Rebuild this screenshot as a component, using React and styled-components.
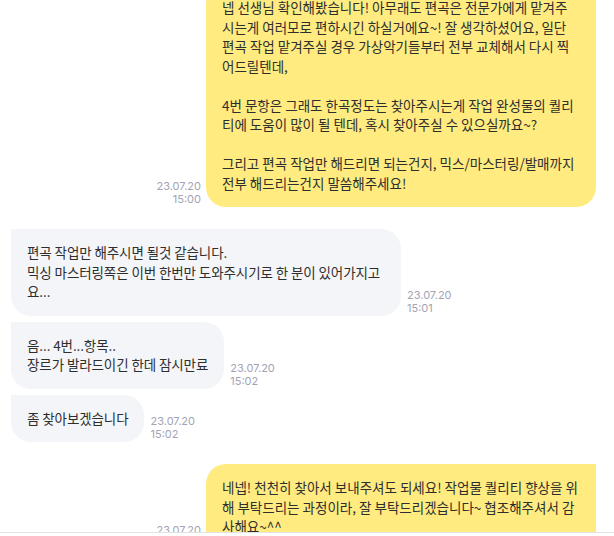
import styled, { createGlobalStyle } from 'styled-components';

const YELLOW = '#FFEB80';
const GRAY = '#F4F5F8';
const TEXT = '#2E2E2E';
const TIME = '#A3A3B3';

const GlobalStyle = createGlobalStyle`
  html, body {
    margin: 0;
    padding: 0;
    background: #fff;
  }
  * {
    box-sizing: border-box;
  }
`;

const Screen = styled.div`
  width: 614px;
  height: 536px;
  display: flex;
  flex-direction: column;
  background: #fff;
  font-family: 'Noto Sans CJK KR', 'Noto Sans', sans-serif;
  overflow: hidden;
`;

const ChatArea = styled.div`
  height: 532px;
  overflow: hidden;
`;

const MessageList = styled.div`
  display: flex;
  flex-direction: column;
  margin-top: -16px;
`;

const Group = styled.div`
  display: flex;
  flex-direction: column;
  gap: 6px;
  margin-bottom: 22px;
`;

const Row = styled.div`
  display: flex;
  align-items: flex-end;
  gap: ${({ $mine }) => ($mine ? '5px' : '6px')};
  flex-direction: ${({ $mine }) => ($mine ? 'row-reverse' : 'row')};
  padding: ${({ $mine }) => ($mine ? '0 18px 0 0' : '0 0 0 11px')};
`;

const Bubble = styled.div`
  max-width: 390px;
  padding: ${({ $mine }) => ($mine ? '14px 17px 14px 16px' : '14px 16px')};
  background: ${({ $mine }) => ($mine ? YELLOW : GRAY)};
  border-radius: ${({ $mine }) => ($mine ? '20px 0 20px 20px' : '0 20px 20px 20px')};
  color: ${TEXT};
  font-size: 13.5px;
  line-height: 19.5px;
  letter-spacing: ${({ $mine }) => ($mine ? '0' : '-0.1px')};
  white-space: pre-wrap;
  word-break: break-all;
`;

const Time = styled.div`
  display: flex;
  flex-direction: column;
  align-items: ${({ $mine }) => ($mine ? 'flex-end' : 'flex-start')};
  font-family: 'Inter', 'Liberation Sans', sans-serif;
  font-size: 11px;
  line-height: 13px;
  color: ${TIME};
  padding-bottom: 1px;
  flex-shrink: 0;
`;

const BottomBar = styled.div`
  flex: 1;
  border-top: 1px solid #E3E3E6;
  background: #fff;
`;

const messages = [
  [
    {
      mine: true,
      date: '23.07.20',
      time: '15:00',
      text:
        '넵 선생님 확인해봤습니다! 아무래도 편곡은 전문가에게 맡겨주시는게 여러모로 편하시긴 하실거에요~! 잘 생각하셨어요, 일단 편곡 작업 맡겨주실 경우 가상악기들부터 전부 교체해서 다시 찍어드릴텐데,\n\n4번 문항은 그래도 한곡정도는 찾아주시는게 작업 완성물의 퀄리티에 도움이 많이 될 텐데, 혹시 찾아주실 수 있으실까요~?\n\n그리고 편곡 작업만 해드리면 되는건지, 믹스/마스터링/발매까지 전부 해드리는건지 말씀해주세요!',
    },
  ],
  [
    {
      mine: false,
      date: '23.07.20',
      time: '15:01',
      text: '편곡 작업만 해주시면 될것 같습니다.\n믹싱 마스터링쪽은 이번 한번만 도와주시기로 한 분이 있어가지고요...',
    },
    {
      mine: false,
      date: '23.07.20',
      time: '15:02',
      text: '음... 4번...항목..\n장르가 발라드이긴 한데 잠시만료',
    },
    {
      mine: false,
      date: '23.07.20',
      time: '15:02',
      text: '좀 찾아보겠습니다',
    },
  ],
  [
    {
      mine: true,
      date: '23.07.20',
      time: '15:03',
      text: '네넵! 천천히 찾아서 보내주셔도 되세요! 작업물 퀄리티 향상을 위해 부탁드리는 과정이라, 잘 부탁드리겠습니다~ 협조해주셔서 감사해요~^^',
    },
  ],
];

export default function App() {
  return (
    <>
      <GlobalStyle />
      <Screen>
        <ChatArea>
          <MessageList>
            {messages.map((group, gi) => (
              <Group key={gi}>
                {group.map((m, i) => (
                  <Row key={i} $mine={m.mine}>
                    <Bubble $mine={m.mine}>{m.text}</Bubble>
                    <Time $mine={m.mine}>
                      <span>{m.date}</span>
                      <span>{m.time}</span>
                    </Time>
                  </Row>
                ))}
              </Group>
            ))}
          </MessageList>
        </ChatArea>
        <BottomBar />
      </Screen>
    </>
  );
}
